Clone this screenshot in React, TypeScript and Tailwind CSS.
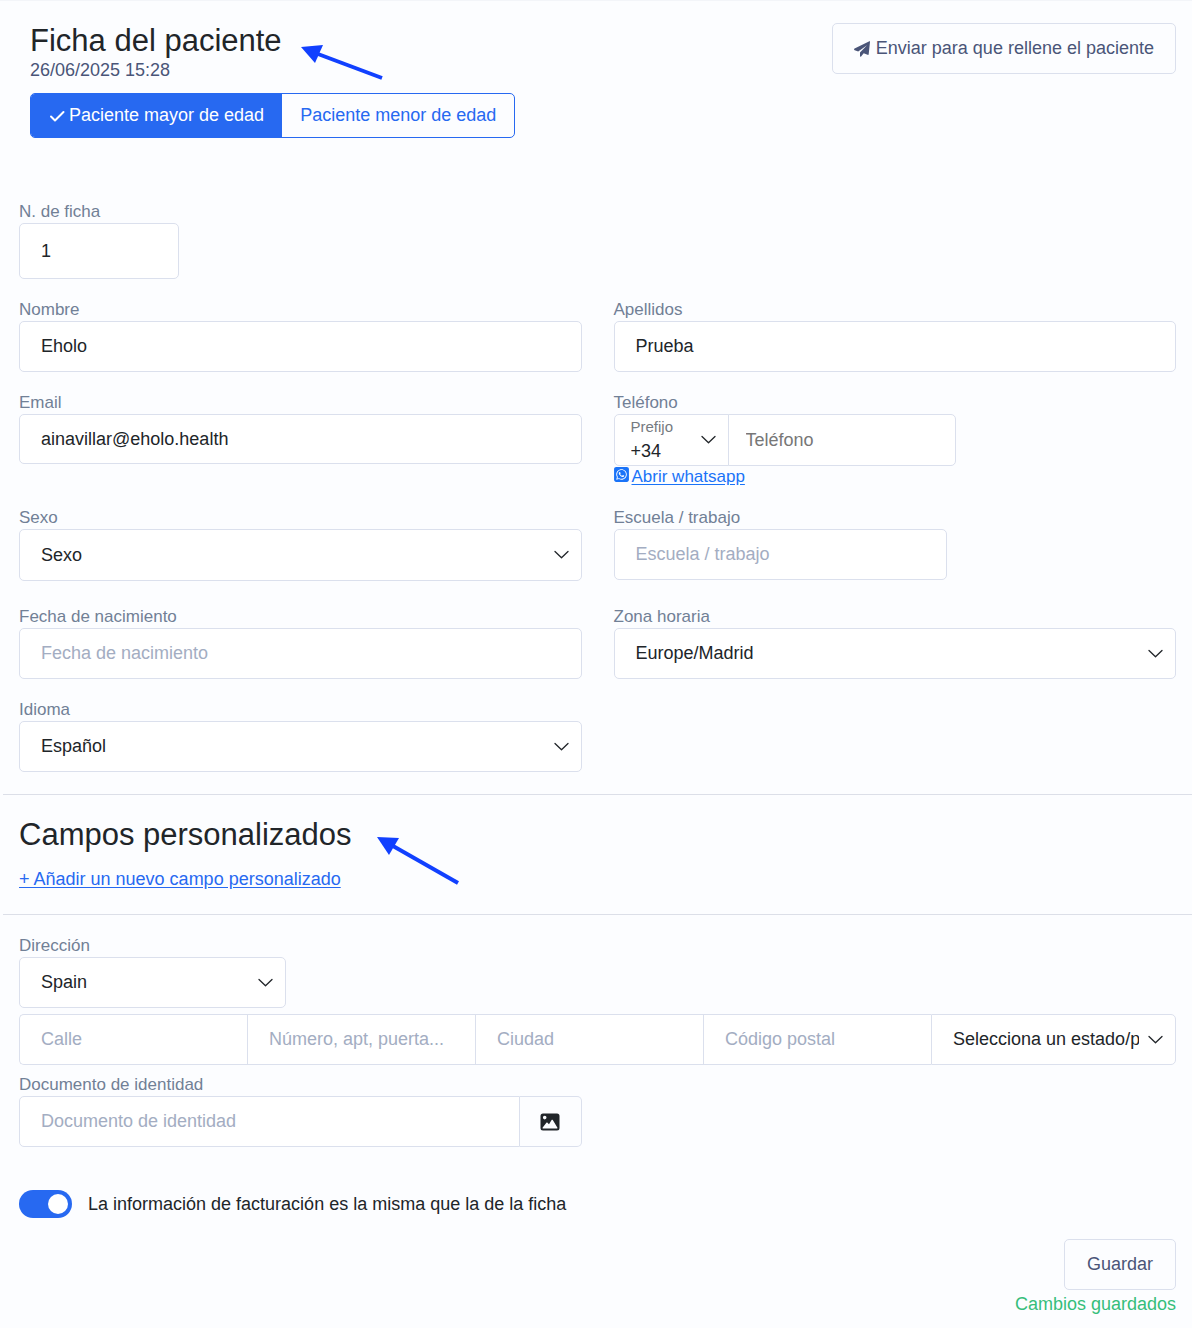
import { useState } from 'react'
import type { ReactNode } from 'react'
import { FaSquareWhatsapp } from 'react-icons/fa6'

const field =
  'block w-full border border-[#dbe0ed] bg-white px-[21px] text-[18px] text-[#212529] placeholder:text-[#a3adc2] placeholder:opacity-100 focus:outline-none focus:border-[#2769f1]'

function Chevron() {
  return (
    <svg
      viewBox="0 0 16 16"
      className="pointer-events-none absolute top-1/2 right-3 size-4 -translate-y-1/2"
      fill="none"
      stroke="#212529"
      strokeWidth="1.3"
      strokeLinecap="round"
      strokeLinejoin="round"
    >
      <path d="m1 4.500 6.500 6.300L14 4.500" />
    </svg>
  )
}

function CheckIcon() {
  return (
    <svg viewBox="0 0 16 16" className="size-4" fill="none" stroke="currentColor" strokeWidth="2" strokeLinecap="round" strokeLinejoin="round">
      <path d="m2 8.500 4 4L14.500 4" />
    </svg>
  )
}

function PlaneIcon() {
  return (
    <svg viewBox="0 0 16 16" className="size-4" fill="currentColor">
      <path d="M15.400.2a.5.5 0 0 1 .6.6l-1.300 12.400a.8.8 0 0 1-1.100.6L9.700 12.200l-2.600 3.300c-.4.5-1.100.2-1.100-.4v-3.500L13 4.200l-8.800 6.200L.7 9.200C-.1 8.900-.1 8 .6 7.600Z" />
    </svg>
  )
}

function ImageIcon() {
  return (
    <svg viewBox="0 0 20 18" className="h-[18px] w-5">
      <path
        fill="#212529"
        fillRule="evenodd"
        d="M3 .5h14A2.500 2.500 0 0 1 19.500 3v12a2.500 2.500 0 0 1-2.500 2.500H3A2.500 2.500 0 0 1 .5 15V3A2.500 2.500 0 0 1 3 .5ZM4.700 2.800a1.800 1.800 0 1 0 0 3.600 1.800 1.800 0 0 0 0-3.600ZM3.200 15.500h13.600c.6 0 .8-.5.5-1l-4.500-7.500c-.3-.5-.9-.5-1.200 0L9 11.300 7.500 9.700c-.4-.4-.8-.4-1.100 0L2.700 14.500c-.3.5-.1 1 .5 1Z"
      />
    </svg>
  )
}

function Field({ id, label, className = '', children }: { id: string; label: string; className?: string; children: ReactNode }) {
  return (
    <div className={className}>
      <label htmlFor={id} className="block pt-0.5 text-[17px] leading-[22px] text-[#718096]">
        {label}
      </label>
      {children}
    </div>
  )
}

function TextInput({ id, value, placeholder, className = 'h-[51px]' }: { id: string; value?: string; placeholder?: string; className?: string }) {
  return <input id={id} type="text" defaultValue={value} placeholder={placeholder} className={`${field} rounded-[5px] ${className}`} />
}

function Select({ id, option, className = 'h-[51px]' }: { id: string; option: string; className?: string }) {
  return (
    <div className="relative">
      <select id={id} className={`${field} appearance-none rounded-[5px] pr-9 ${className}`}>
        <option>{option}</option>
      </select>
      <Chevron />
    </div>
  )
}

export default function App() {
  const [adult, setAdult] = useState(true)
  const [sameBilling, setSameBilling] = useState(true)

  return (
    <main className="min-h-screen border-t border-[#f3f5f9] bg-[#fcfdff] pb-2 font-['Liberation_Sans',Arial,sans-serif] text-[18px] text-[#212529]">
      <form onSubmit={(e) => e.preventDefault()}>
        <header className="flex items-start justify-between pt-[22px] pr-4 pl-[30px]">
          <div>
            <h1 className="text-[31px] leading-9">Ficha del paciente</h1>
            <p className="text-[18px] leading-[22px] text-[#4a5578]">26/06/2025 15:28</p>
            <div className="mt-3 flex h-[45px] w-fit overflow-hidden rounded-[5px] border border-[#2769f1]">
              <button
                type="button"
                aria-pressed={adult}
                onClick={() => setAdult(true)}
                className={`flex items-center gap-1 pr-[18px] pl-[18px] ${adult ? 'bg-[#2769f1] text-white' : 'text-[#2769f1]'}`}
              >
                {adult && <CheckIcon />}
                Paciente mayor de edad
              </button>
              <button
                type="button"
                aria-pressed={!adult}
                onClick={() => setAdult(false)}
                className={`flex items-center px-[18px] ${adult ? 'text-[#2769f1]' : 'bg-[#2769f1] text-white'}`}
              >
                Paciente menor de edad
              </button>
            </div>
          </div>
          <button type="button" className="flex h-[51px] items-center gap-1.5 rounded-[5px] border border-[#dbe0ed] px-[21px] text-[#4a5578]">
            <PlaneIcon />
            Enviar para que rellene el paciente
          </button>
        </header>

        <section className="grid grid-cols-2 items-start gap-x-8 gap-y-[18px] pt-[61px] pr-4 pb-[22px] pl-[19px]">
          <Field id="ficha" label="N. de ficha" className="col-span-2 w-40">
            <TextInput id="ficha" value="1" className="h-14" />
          </Field>
          <Field id="nombre" label="Nombre">
            <TextInput id="nombre" value="Eholo" />
          </Field>
          <Field id="apellidos" label="Apellidos">
            <TextInput id="apellidos" value="Prueba" />
          </Field>
          <Field id="email" label="Email">
            <TextInput id="email" value="ainavillar@eholo.health" className="h-[50px]" />
          </Field>
          <Field id="telefono" label="Teléfono">
            <div className="flex h-[52px]">
              <div className="relative w-[115px]">
                <label htmlFor="prefijo" className="absolute top-[5px] left-[17px] text-[15px] leading-4 text-[#757a80]">
                  Prefijo
                </label>
                <select
                  id="prefijo"
                  className="block h-full w-full appearance-none rounded-l-[5px] border border-[#dbe0ed] bg-white pt-[22px] pl-4 text-[18px] text-[#212529] focus:outline-none"
                >
                  <option>+34</option>
                </select>
                <Chevron />
              </div>
              <input
                id="telefono"
                type="tel"
                placeholder="Teléfono"
                className="-ml-px w-[228px] rounded-r-[5px] border border-[#dbe0ed] bg-white px-[17px] placeholder:text-[#777777] placeholder:opacity-100 focus:outline-none"
              />
            </div>
            <a href="#whatsapp" className="flex w-fit text-[17px] leading-[21px] text-[#1a73f8]">
              <FaSquareWhatsapp size={17} className="-ml-px" />
              <span className="pl-0.5 underline underline-offset-2">Abrir whatsapp</span>
            </a>
          </Field>
          <Field id="sexo" label="Sexo" className="pb-[5px]">
            <Select id="sexo" option="Sexo" className="h-[52px]" />
          </Field>
          <Field id="escuela" label="Escuela / trabajo">
            <TextInput id="escuela" placeholder="Escuela / trabajo" className="h-[51px] max-w-[333px]" />
          </Field>
          <Field id="nacimiento" label="Fecha de nacimiento">
            <TextInput id="nacimiento" placeholder="Fecha de nacimiento" />
          </Field>
          <Field id="zona" label="Zona horaria">
            <Select id="zona" option="Europe/Madrid" />
          </Field>
          <Field id="idioma" label="Idioma">
            <Select id="idioma" option="Español" />
          </Field>
        </section>

        <section className="ml-[3px] border-y border-[#dcdfe8] pt-5 pb-[23px] pl-4">
          <h2 className="text-[31px] leading-10">Campos personalizados</h2>
          <a href="#nuevo-campo" className="mt-3 block w-fit leading-6 text-[#2769f1] underline underline-offset-2">
            + Añadir un nuevo campo personalizado
          </a>
        </section>

        <section className="pt-[18px] pr-4 pl-[19px]">
          <Field id="pais" label="Dirección" className="w-[267px]">
            <Select id="pais" option="Spain" />
          </Field>
          <div className="mt-1.5 flex h-[51px]">
            <input aria-label="Calle" placeholder="Calle" className={`${field} min-w-0 flex-1 rounded-l-[5px] border-r-0`} />
            <input aria-label="Número" placeholder="Número, apt, puerta..." className={`${field} min-w-0 flex-1 border-r-0`} />
            <input aria-label="Ciudad" placeholder="Ciudad" className={`${field} min-w-0 flex-1 border-r-0`} />
            <input aria-label="Código postal" placeholder="Código postal" className={`${field} min-w-0 flex-1 border-r-0`} />
            <div className="relative w-[245px]">
              <select aria-label="Estado o provincia" className={`${field} h-full appearance-none rounded-r-[5px] pr-9`}>
                <option>Selecciona un estado/provincia</option>
              </select>
              <Chevron />
            </div>
          </div>
          <div className="mt-[7px] grid grid-cols-2 gap-x-8">
            <Field id="documento" label="Documento de identidad">
              <div className="flex h-[51px]">
                <input id="documento" placeholder="Documento de identidad" className={`${field} min-w-0 flex-1 rounded-l-[5px]`} />
                <button
                  type="button"
                  aria-label="Subir imagen"
                  className="flex w-[62px] items-center justify-center rounded-r-[5px] border border-l-0 border-[#dbe0ed]"
                >
                  <ImageIcon />
                </button>
              </div>
            </Field>
          </div>

          <label className="mt-[43px] flex w-fit items-center gap-4">
            <input type="checkbox" role="switch" checked={sameBilling} onChange={(e) => setSameBilling(e.target.checked)} className="peer sr-only" />
            <span className="flex h-7 w-[53px] items-center rounded-full bg-[#c5cbd8] px-1 peer-checked:justify-end peer-checked:bg-[#2769f1]">
              <span className="size-5 rounded-full bg-white" />
            </span>
            La información de facturación es la misma que la de la ficha
          </label>

          <div className="mt-[21px] flex flex-col items-end">
            <button type="submit" className="h-[51px] w-28 rounded-[5px] border border-[#dbe0ed] text-[#4a5578]">
              Guardar
            </button>
            <p className="leading-7 text-[#36be7b]">Cambios guardados</p>
          </div>
        </section>
      </form>

      <svg viewBox="0 0 82 36" className="pointer-events-none absolute top-11 left-[301px] h-9 w-[82px]">
        <path d="M17 10 81 34" stroke="#1140ff" strokeWidth="4" />
        <path d="M0 3 22 1 14 19Z" fill="#1140ff" />
      </svg>
      <svg viewBox="0 0 82 50" className="pointer-events-none absolute top-[836px] left-[377px] h-[50px] w-[82px]">
        <path d="M16 10 81 47" stroke="#1140ff" strokeWidth="4" />
        <path d="M0 1 22 2 12 19Z" fill="#1140ff" />
      </svg>
    </main>
  )
}
